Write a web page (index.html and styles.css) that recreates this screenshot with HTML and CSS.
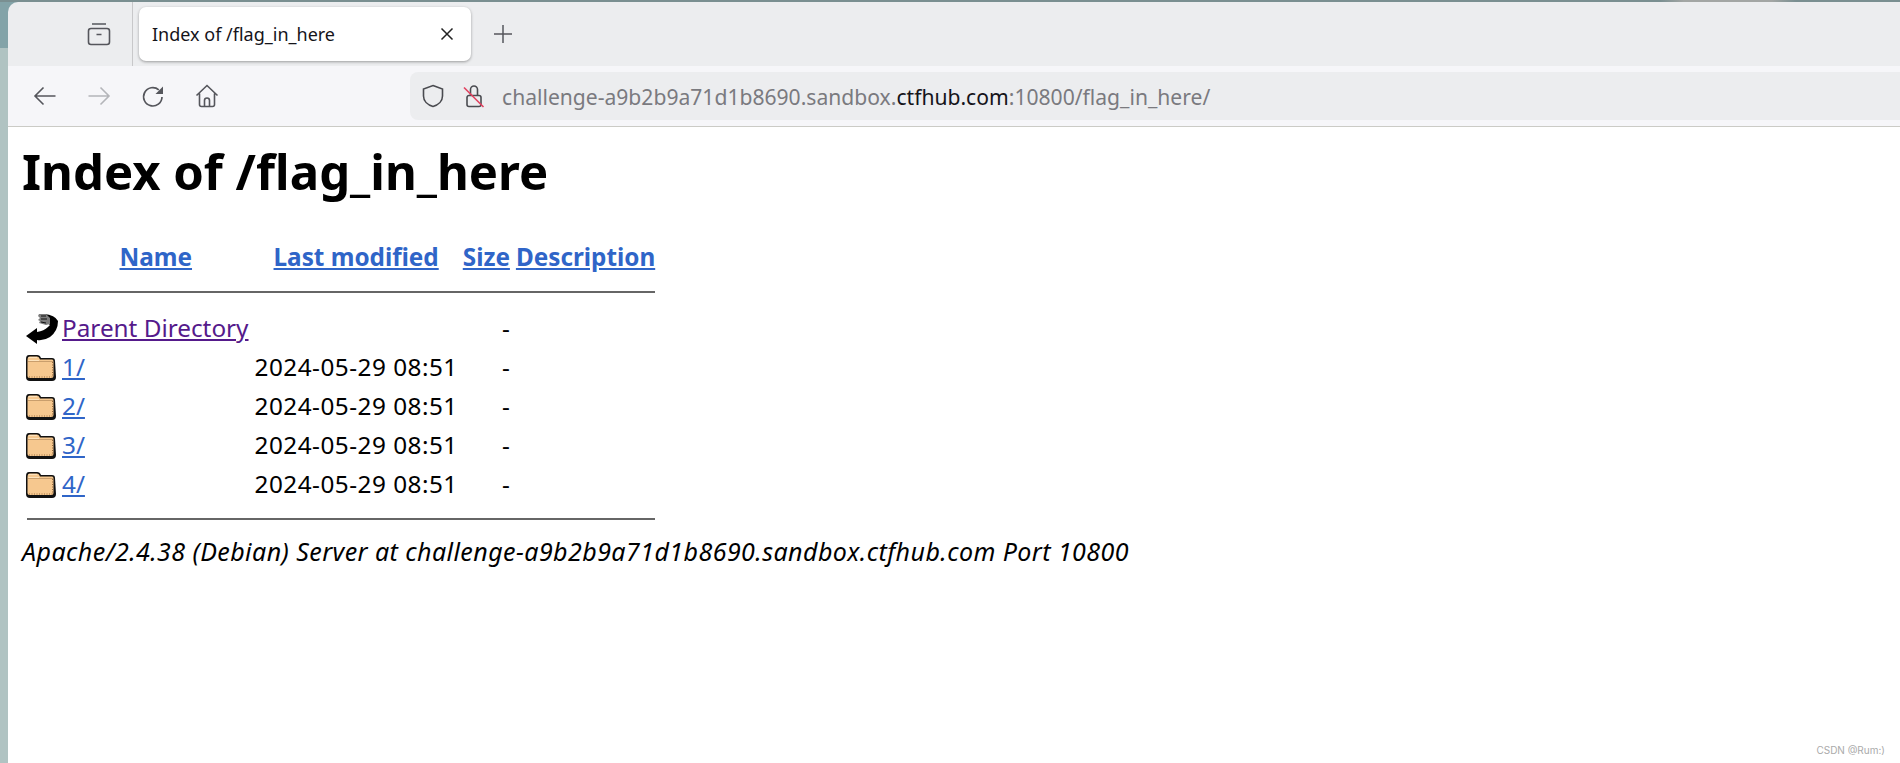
FILE: index.html
```html
<!DOCTYPE html>
<html>
<head>
  <meta charset="UTF-8">
  <title>Index of /flag_in_here</title>
  <link rel="stylesheet" href="styles.css">
</head>
<body>

<svg class="defs" width="0" height="0">
  <defs>
    <symbol id="folder" viewBox="0 0 30 27">
      <path d="M0 5 Q0 1 3 1 L11 1 Q14 1 15 4 L26 4 Q29 4 29 7 L30 23 Q30 27 26 27 L4 27 Q0 27 0 23 Z" fill="#111"/>
      <path d="M1.500 6 Q1.500 2.500 4 2.500 L11 2.500 Q13 2.500 14 5.500 L26 5.500 Q27.500 5.500 27.500 7.500 L27.500 22 Q27.500 24 25.500 24 L3.500 24 Q1.500 24 1.500 22 Z" fill="#f6c88f"/>
      <path d="M2 7.500 L27 7.500" stroke="#c99e6c" stroke-width="1"/>
      <path d="M2.500 3.500 L11 3.500 M2.500 6.500 L13 6.500" stroke="#fde3bd" stroke-width="1"/>
      <path d="M26.500 8 L26.500 23 L3 23" stroke="#9a6c3e" stroke-width="1" stroke-dasharray="1 1.500" fill="none"/>
    </symbol>
  </defs>
</svg>

<div class="window">
  <div class="tabbar">
    <div class="tab-side">
      <svg width="24" height="24" viewBox="0 0 24 24" fill="none" stroke="#55565c" stroke-width="1.6">
        <path d="M5 2h14"/>
        <rect x="1.500" y="6.500" width="21" height="16" rx="2.500"/>
        <path d="M9.500 12.500h5"/>
      </svg>
    </div>
    <div class="tab">
      <span class="tab-title">Index of /flag_in_here</span>
      <svg width="14" height="14" viewBox="0 0 14 14" stroke="#222" stroke-width="1.5"><path d="M1.500 1.500l11 11M12.500 1.500l-11 11"/></svg>
    </div>
    <svg class="newtab" width="20" height="20" viewBox="0 0 20 20" stroke="#55565c" stroke-width="1.5"><path d="M10 1v18M1 10h18"/></svg>
  </div>

  <div class="navbar">
    <div class="nav-btns">
      <svg width="24" height="24" viewBox="0 0 24 24" fill="none" stroke="#55565c" stroke-width="1.6"><path d="M22.500 12H2M10.500 3.500L2 12l8.500 8.500"/></svg>
      <svg width="24" height="24" viewBox="0 0 24 24" fill="none" stroke="#b4b5b9" stroke-width="1.6"><path d="M1.500 12H22M13.500 3.500L22 12l-8.500 8.500"/></svg>
      <svg width="24" height="24" viewBox="0 0 24 24" fill="none" stroke="#55565c" stroke-width="1.7"><path d="M21 13a9.200 9.200 0 1 1-3.200-7.200"/><path d="M22 2.500v7.500h-7.500" fill="#55565c" stroke="none"/></svg>
      <svg width="24" height="24" viewBox="0 0 24 24" fill="none" stroke="#55565c" stroke-width="1.6"><path d="M1.500 11.500L12 1.500l10.500 10M4.500 9.500v11a2 2 0 0 0 2 2h11a2 2 0 0 0 2-2v-11"/><path d="M9.500 22.500v-6a2.500 2.500 0 0 1 5 0v6"/></svg>
    </div>
    <div class="urlbar">
      <svg width="22" height="24" viewBox="0 0 22 24" fill="none" stroke="#4a4b50" stroke-width="1.6"><path d="M11 1.500L20.500 5v7c0 5-4 9-9.500 10.500C5.500 21 1.500 17 1.500 12V5z"/></svg>
      <svg class="lock" width="22" height="24" viewBox="0 0 22 24" fill="none" stroke="#4a4b50" stroke-width="1.6">
        <path d="M7.500 11V5.500a3.500 3.500 0 0 1 7 0V11"/>
        <path d="M6 11.500h10a2 2 0 0 1 2 2v7a2 2 0 0 1-2 2H6a2 2 0 0 1-2-2v-7a2 2 0 0 1 2-2z"/>
        <path d="M1 3.500L20.500 23" stroke="#e0405e"/>
      </svg>
      <span class="url">challenge-a9b2b9a71d1b8690.sandbox.<b>ctfhub.com</b>:10800/flag_in_here/</span>
    </div>
  </div>

  <div class="page">
    <h1>Index of /flag_in_here</h1>
    <table>
      <tr>
        <th class="col-icon"></th>
        <th><a href="#">Name</a></th>
        <th><a href="#">Last modified</a></th>
        <th><a href="#">Size</a></th>
        <th class="col-desc"><a href="#">Description</a></th>
      </tr>
      <tr><th colspan="5"><hr></th></tr>
      <tr>
        <td class="col-icon">
          <svg class="icon" width="32" height="32" viewBox="0 0 32 32">
            <path d="M0 24 L11 16 L11 20 Q18 19 22 15 L24 13 L18 9 L18 2 Q29 3 32 9 Q32 19 24 25 Q18 29 11 28 L11 32 Z" fill="#000"/>
            <path d="M13 2 L20 2 L24 6 L24 12 L20 13 L13 11 L14 9 L12 8 L14 6 L12 4 Z" fill="#7d7d7d"/>
            <path d="M15 4 L20 4 M15 7 L21 7 M15 10 L20 11" stroke="#111" stroke-width="1"/>
          </svg>
        </td>
        <td><a class="visited" href="#">Parent Directory</a></td>
        <td></td>
        <td class="size">-</td>
        <td></td>
      </tr>
      <tr>
        <td class="col-icon"><svg class="icon" width="30" height="27"><use href="#folder"/></svg></td>
        <td><a href="#">1/</a></td>
        <td class="date">2024-05-29 08:51</td>
        <td class="size">-</td>
        <td></td>
      </tr>
      <tr>
        <td class="col-icon"><svg class="icon" width="30" height="27"><use href="#folder"/></svg></td>
        <td><a href="#">2/</a></td>
        <td class="date">2024-05-29 08:51</td>
        <td class="size">-</td>
        <td></td>
      </tr>
      <tr>
        <td class="col-icon"><svg class="icon" width="30" height="27"><use href="#folder"/></svg></td>
        <td><a href="#">3/</a></td>
        <td class="date">2024-05-29 08:51</td>
        <td class="size">-</td>
        <td></td>
      </tr>
      <tr>
        <td class="col-icon"><svg class="icon" width="30" height="27"><use href="#folder"/></svg></td>
        <td><a href="#">4/</a></td>
        <td class="date">2024-05-29 08:51</td>
        <td class="size">-</td>
        <td></td>
      </tr>
      <tr><th colspan="5"><hr></th></tr>
    </table>
    <address>Apache/2.4.38 (Debian) Server at challenge-a9b2b9a71d1b8690.sandbox.ctfhub.com Port 10800</address>
    <div class="watermark">CSDN @Rum:)</div>
  </div>
</div>

</body>
</html>
```

FILE: styles.css
```css
* {
  box-sizing: border-box;
}

html, body {
  height: 100%;
}

/* Desktop wallpaper showing around the window */
body {
  margin: 0;
  padding: 2px 0 0 8px;
  background:
    linear-gradient(90deg, transparent, #a3a6a4 24px, #a3a6a4 112px, transparent) 1660px 0 / 136px 2px no-repeat,
    linear-gradient(#7a8f91 0 2px, #83a3a8 2px 48px, #b0c3c2 48px);
  font-family: "Noto Sans", "Open Sans", sans-serif;
  overflow: hidden;
}

.defs {
  display: block;
}

.window {
  height: 761px;
  display: flex;
  flex-direction: column;
  border-top-left-radius: 10px;
  overflow: hidden;
}

/* Tab strip */
.tabbar {
  height: 64px;
  background: #ecedef;
  display: flex;
  align-items: center;
}

.tab-side {
  width: 125px;
  height: 100%;
  border-right: 1px solid #c8c8ca;
  display: flex;
  align-items: center;
  justify-content: center;
  padding-left: 58px;
}

.tab {
  width: 332px;
  height: 54px;
  margin: 0 0 1px 6px;
  padding: 0 17px 0 13px;
  background: #fff;
  border-radius: 7px;
  box-shadow: 0 1px 3px rgba(0, 0, 0, 0.35);
  display: flex;
  align-items: center;
  justify-content: space-between;
}

.tab-title {
  font-size: 18px;
  color: #15141a;
}

.newtab {
  margin-left: 22px;
}

/* Address row */
.navbar {
  height: 61px;
  background: #f6f6f9;
  border-bottom: 1px solid #cbcbc6;
  display: flex;
  align-items: center;
}

.nav-btns {
  width: 402px;
  padding-left: 25px;
  display: flex;
  gap: 30px;
}

.urlbar {
  flex: 1;
  height: 48px;
  background: #ecedef;
  border-radius: 8px 0 0 8px;
  padding-left: 12px;
  display: flex;
  align-items: center;
}

.lock {
  margin-left: 19px;
}

.url {
  margin-left: 17px;
  font-size: 21.1px;
  color: #7a7a7f;
}

.url b {
  font-weight: normal;
  color: #15141a;
}

/* Directory listing */
.page {
  flex: 1;
  position: relative;
  background: #fff;
  padding: 11px 14px;
  font-size: 24.3px;
  color: #000;
}

h1 {
  margin: 0 0 32px;
  font-size: 49px;
  line-height: 66px;
  font-weight: bold;
}

table {
  border-spacing: 3px;
  margin-left: 1px;
}

th, td {
  padding: 1px;
  line-height: 34px;
  text-align: left;
  white-space: nowrap;
}

td:nth-child(2) {
  padding-right: 2px;
}

th {
  font-weight: bold;
  text-align: center;
}

.col-icon {
  width: 32px;
  padding: 0;
}

.col-desc {
  padding-left: 2px;
}

.icon {
  display: block;
}

a {
  color: #2f65c8;
}

a.visited {
  color: #551a8b;
}

.date {
  letter-spacing: 0.5px;
}

.size {
  text-align: right;
}

hr {
  border: 0;
  border-top: 2px solid #666;
  margin: 12px 0 13px;
}

address {
  margin-top: 1px;
  font-size: 25px;
  line-height: 26px;
  letter-spacing: 0.44px;
  font-style: italic;
}

.watermark {
  position: absolute;
  right: 15px;
  bottom: 7px;
  font-family: Inter, sans-serif;
  font-size: 10px;
  color: #aaa;
}
```
